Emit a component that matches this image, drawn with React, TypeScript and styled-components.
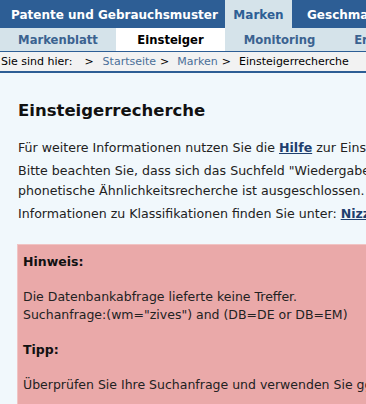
import styled, { createGlobalStyle } from 'styled-components'

const GlobalStyle = createGlobalStyle`
    html, body {
        margin: 0;
        padding: 0;
        background: #f1f8fc;
    }
    body {
        font-family: 'DejaVu Sans', Verdana, sans-serif;
        width: 366px;
        height: 404px;
        overflow: hidden;
    }
`

const topTabs = [
    { label: 'Patente und Gebrauchsmuster', width: 225, active: false },
    { label: 'Marken', width: 67, active: true },
    { label: 'Geschmacksmuster', width: 180, active: false },
]

const subTabs = [
    { label: 'Markenblatt', width: 116, active: false },
    { label: 'Einsteiger', width: 109, active: true },
    { label: 'Monitoring', width: 109, active: false },
    { label: 'Erweiterte', width: 109, active: false },
]

export default function App() {
    return (
        <Page>
            <GlobalStyle />
            <TopBar>
                {topTabs.map((t, i) => (
                    <TopTab key={t.label} $active={t.active} $first={i === 0} style={{ width: t.width }}>
                        {t.label}
                    </TopTab>
                ))}
            </TopBar>
            <SubBar>
                {subTabs.map((t) => (
                    <SubTab key={t.label} $active={t.active} style={{ width: t.width }}>
                        {t.label}
                    </SubTab>
                ))}
            </SubBar>
            <Breadcrumb>
                Sie sind hier:<Sep $wide>&gt;</Sep>
                <Crumb>Startseite</Crumb>
                <Sep>&gt;</Sep>
                <Crumb>Marken</Crumb>
                <Sep>&gt;</Sep>
                Einsteigerrecherche
            </Breadcrumb>
            <Content>
                <Heading>Einsteigerrecherche</Heading>
                <Para>
                    Für weitere Informationen nutzen Sie die <Link>Hilfe</Link> zur Einsteigerrecherche.
                </Para>
                <Para>
                    Bitte beachten Sie, dass sich das Suchfeld "Wiedergabe der Marke"
                    <br />
                    phonetische Ähnlichkeitsrecherche ist ausgeschlossen.
                </Para>
                <Para>
                    Informationen zu Klassifikationen finden Sie unter: <Link>Nizza</Link>
                </Para>
                <Notice>
                    <NoticeTitle>Hinweis:</NoticeTitle>
                    <NoticeText>
                        Die Datenbankabfrage lieferte keine Treffer.
                        <br />
                        Suchanfrage:(wm="zives") and (DB=DE or DB=EM)
                    </NoticeText>
                    <NoticeTitle>Tipp:</NoticeTitle>
                    <NoticeText>Überprüfen Sie Ihre Suchanfrage und verwenden Sie ggf. Platzhalter.</NoticeText>
                </Notice>
            </Content>
        </Page>
    )
}

const Page = styled.div`
    width: 366px;
    height: 404px;
    overflow: hidden;
    background: #f1f8fc;
`

const TopBar = styled.div`
    display: flex;
    height: 28px;
    background: #2d5e95;
    white-space: nowrap;
`

const TopTab = styled.div<{ $active: boolean; $first: boolean }>`
    flex-shrink: 0;
    display: flex;
    align-items: center;
    justify-content: ${(p) => (p.$active ? 'center' : 'flex-start')};
    padding-left: ${(p) => (p.$active ? '0' : p.$first ? '11px' : '15px')};
    padding-top: 2px;
    box-sizing: border-box;
    font-size: 12px;
    font-weight: bold;
    color: ${(p) => (p.$active ? '#2d5e95' : '#ffffff')};
    background: ${(p) => (p.$active ? '#d5e3ea' : 'transparent')};
`

const SubBar = styled.div`
    display: flex;
    height: 23px;
    background: #d5e3ea;
    border-bottom: 1px solid #2d5e95;
    white-space: nowrap;
`

const SubTab = styled.div<{ $active: boolean }>`
    flex-shrink: 0;
    display: flex;
    align-items: center;
    justify-content: center;
    font-size: 11.6px;
    font-weight: bold;
    color: ${(p) => (p.$active ? '#000000' : '#3b6290')};
    background: ${(p) => (p.$active ? '#ffffff' : 'transparent')};
`

const Breadcrumb = styled.div`
    height: 19px;
    line-height: 19px;
    padding-left: 1px;
    font-size: 11px;
    color: #000000;
    background: #f2f2f2;
    border-bottom: 2px solid #2d5e95;
    white-space: nowrap;
`

const Sep = styled.span<{ $wide?: boolean }>`
    margin: ${(p) => (p.$wide ? '0 9px 0 12px' : '0 8px 0 4px')};
`

const Crumb = styled.span`
    color: #4a6f98;
`

const Content = styled.div`
    padding: 27px 0 0 18px;
    white-space: nowrap;
`

const Heading = styled.h1`
    margin: 0 0 16px;
    font-size: 16.5px;
    font-weight: bold;
    line-height: 22px;
    color: #111111;
`

const Para = styled.p`
    margin: 0 0 3px;
    font-size: 12.6px;
    line-height: 20px;
    color: #222222;
`

const Link = styled.a`
    color: #1f3f6e;
    font-weight: bold;
    text-decoration: underline;
`

const Notice = styled.div`
    margin-top: 20px;
    margin-left: -1px;
    padding: 8px 5px 0;
    background: #eaa9a9;
    border: 1px solid #f0c4c4;
    border-right: none;
    height: 200px;
`

const NoticeTitle = styled.div`
    font-size: 12.5px;
    font-weight: bold;
    line-height: 18px;
    color: #111111;
    margin-bottom: 17px;
`

const NoticeText = styled.div`
    font-size: 12.5px;
    line-height: 18px;
    color: #222222;
    margin-bottom: 17px;
`
